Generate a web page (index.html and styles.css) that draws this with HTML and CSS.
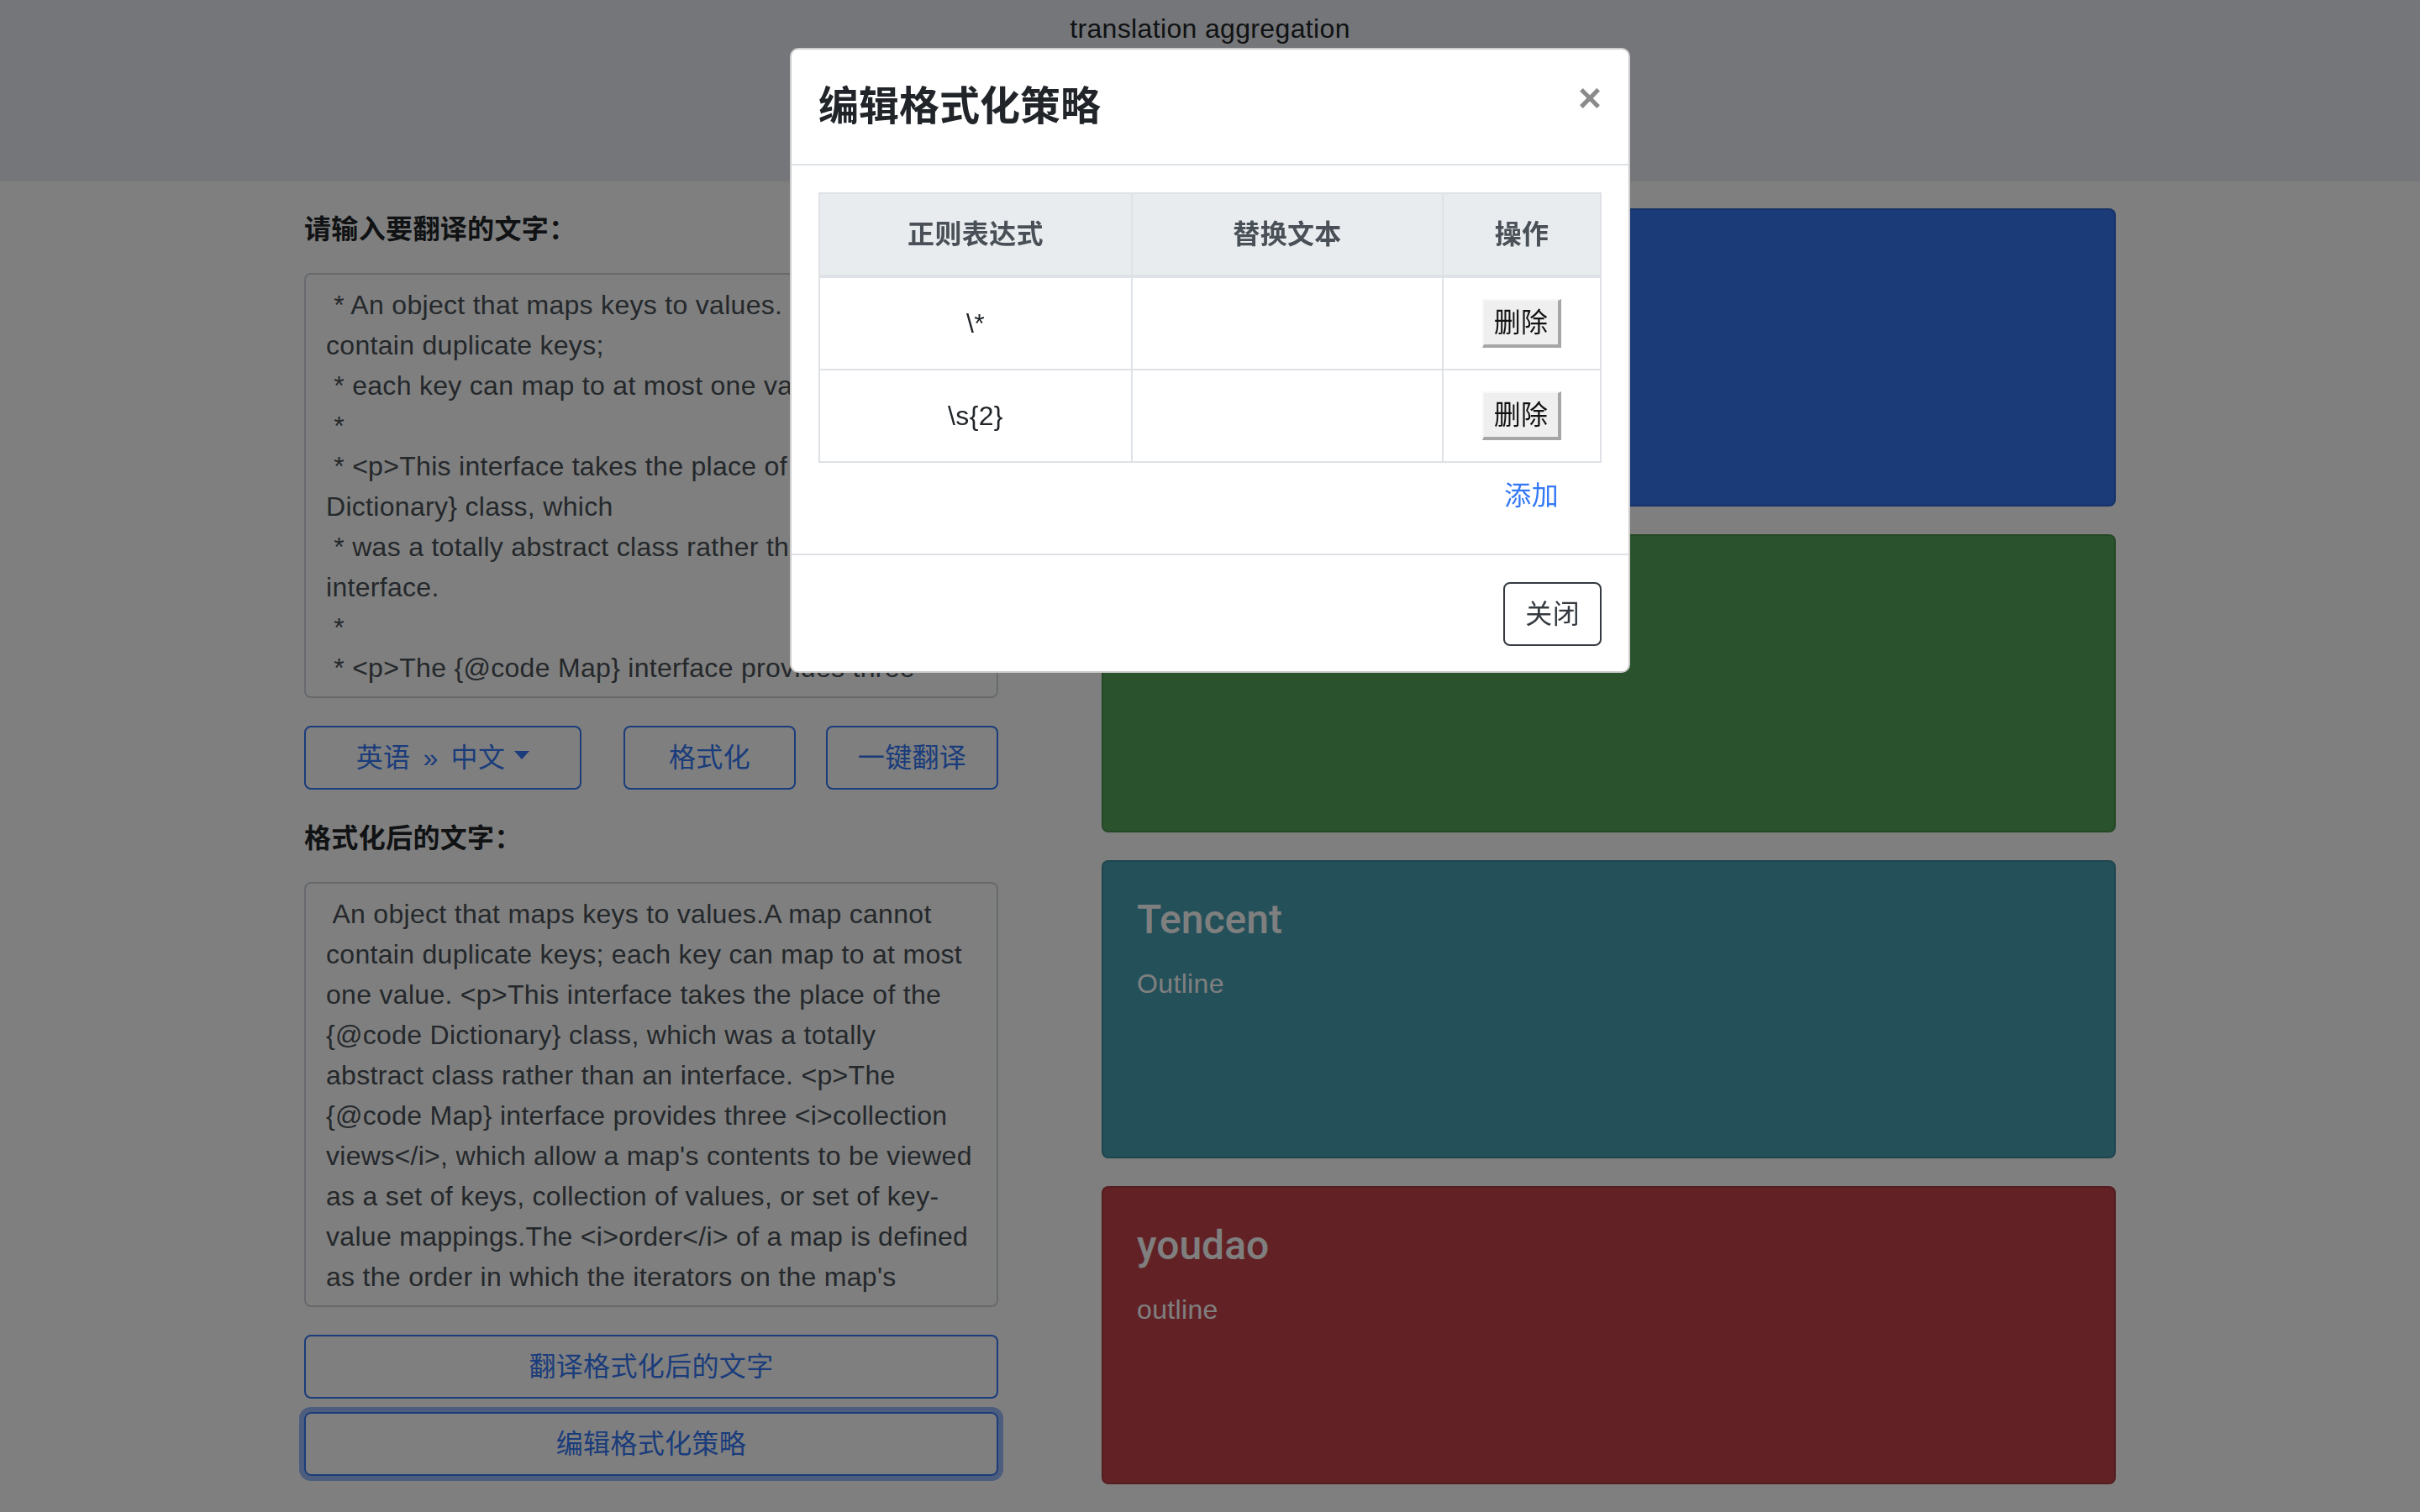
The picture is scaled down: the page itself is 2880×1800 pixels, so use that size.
FILE: index.html
```html
<!DOCTYPE html>
<html lang="zh-CN">
<head>
<meta charset="utf-8">
<title>translation aggregation</title>
<link rel="stylesheet" href="styles.css">
</head>
<body>
<header class="topbar">
  <div class="brand">translation aggregation</div>
</header>

<main class="page">
  <section class="left-col">
    <label class="field-label">请输入要翻译的文字：</label>
    <textarea class="form-control" spellcheck="false"> * An object that maps keys to values.  A map cannot
contain duplicate keys;
 * each key can map to at most one value.
 *
 * &lt;p&gt;This interface takes the place of the {@code
Dictionary} class, which
 * was a totally abstract class rather than an
interface.
 *
 * &lt;p&gt;The {@code Map} interface provides three
 * &lt;i&gt;collection views&lt;/i&gt;, which allow a map's contents to be viewed</textarea>

    <div class="btn-row">
      <button class="btn btn-outline-primary btn-lang">英语<span class="sep">»</span>中文<span class="caret"></span></button>
      <button class="btn btn-outline-primary btn-act">格式化</button>
      <button class="btn btn-outline-primary btn-act btn-act-last">一键翻译</button>
    </div>

    <label class="field-label">格式化后的文字：</label>
    <textarea class="form-control" spellcheck="false"> An object that maps keys to values.A map cannot
contain duplicate keys; each key can map to at most
one value. &lt;p&gt;This interface takes the place of the
{@code Dictionary} class, which was a totally
abstract class rather than an interface. &lt;p&gt;The
{@code Map} interface provides three &lt;i&gt;collection
views&lt;/i&gt;, which allow a map's contents to be viewed
as a set of keys, collection of values, or set of key-
value mappings.The &lt;i&gt;order&lt;/i&gt; of a map is defined
as the order in which the iterators on the map's
collection views return their elements.</textarea>

    <button class="btn btn-outline-primary btn-block">翻译格式化后的文字</button>
    <button class="btn btn-outline-primary btn-block btn-focus">编辑格式化策略</button>
  </section>

  <section class="right-col">
    <div class="card card-primary">
      <h4 class="card-title">Google</h4>
      <p class="card-text">Outline</p>
    </div>
    <div class="card card-success">
      <h4 class="card-title">Baidu</h4>
      <p class="card-text">Outline</p>
    </div>
    <div class="card card-info">
      <h4 class="card-title">Tencent</h4>
      <p class="card-text">Outline</p>
    </div>
    <div class="card card-danger">
      <h4 class="card-title">youdao</h4>
      <p class="card-text">outline</p>
    </div>
  </section>
</main>

<div class="backdrop"></div>

<div class="modal">
  <div class="modal-dialog">
    <div class="modal-content">
      <div class="modal-header">
        <h4 class="modal-title">编辑格式化策略</h4>
        <button class="close" type="button">×</button>
      </div>
      <div class="modal-body">
        <table class="rules">
          <thead>
            <tr>
              <th class="col-regex">正则表达式</th>
              <th class="col-repl">替换文本</th>
              <th>操作</th>
            </tr>
          </thead>
          <tbody>
            <tr>
              <td>\*</td>
              <td></td>
              <td><button class="btn-del" type="button">删除</button></td>
            </tr>
            <tr>
              <td>\s{2}</td>
              <td></td>
              <td><button class="btn-del" type="button">删除</button></td>
            </tr>
          </tbody>
        </table>
        <div class="add-row"><a class="add-link">添加</a></div>
      </div>
      <div class="modal-footer">
        <button class="btn btn-outline-dark" type="button">关闭</button>
      </div>
    </div>
  </div>
</div>
</body>
</html>
```

FILE: styles.css
```css
html, body {
  margin: 0;
  padding: 0;
}

body {
  width: 2880px;
  height: 1800px;
  overflow: hidden;
  background: #fff;
  color: #212529;
  font-family: "Liberation Sans", "Noto Sans CJK SC", sans-serif;
  font-size: 32px;
  line-height: 1.5;
  letter-spacing: 0.35px;
}

/* top bar */
.topbar {
  height: 216px;
  box-sizing: border-box;
  padding-top: 10px;
  background: #eaedf2;
  text-align: center;
}

.brand {
  font-size: 32px;
  line-height: 48px;
}

/* page layout */
.page {
  width: 2156px;
  margin: 0 auto;
  padding-top: 32px;
  display: flex;
  gap: 123px;
}

.left-col {
  width: 826px;
  display: flex;
  flex-direction: column;
}

.right-col {
  width: 1207px;
  display: flex;
  flex-direction: column;
  gap: 33px;
}

.field-label {
  display: block;
  font-weight: 700;
  line-height: 48px;
  margin-top: 1px;
  margin-bottom: 28px;
}

.form-control {
  display: block;
  width: 100%;
  height: 506px;
  box-sizing: border-box;
  margin: 0 0 33px;
  padding: 12px 24px;
  border: 2px solid #ced4da;
  border-radius: 8px;
  background: #fff;
  color: #495057;
  font-family: inherit;
  font-size: 32px;
  line-height: 48px;
  letter-spacing: 0.3px;
  white-space: pre;
  overflow: hidden;
  resize: none;
  outline: none;
}

/* buttons */
.btn {
  box-sizing: border-box;
  height: 76px;
  padding: 12px 24px;
  border: 2px solid transparent;
  border-radius: 8px;
  background: transparent;
  font-family: inherit;
  font-size: 32px;
  line-height: 48px;
  letter-spacing: inherit;
  text-align: center;
  white-space: nowrap;
}

.btn-outline-primary {
  color: #3478f6;
  border-color: #3478f6;
}

.btn-outline-dark {
  color: #343a40;
  border-color: #343a40;
  background: #fff;
}

.btn-row {
  display: flex;
  margin-bottom: 33px;
}

.btn-lang {
  width: 330px;
  margin-right: 50px;
}

.btn-lang .sep {
  margin: 0 15px;
}

.caret {
  display: inline-block;
  width: 0;
  height: 0;
  margin-left: 11px;
  vertical-align: 9px;
  border-top: 10px solid #3478f6;
  border-left: 9px solid transparent;
  border-right: 9px solid transparent;
}

.btn-act {
  width: 205px;
}

.btn-act-last {
  margin-left: 36px;
}

.btn-block {
  display: block;
  width: 100%;
  margin-bottom: 16px;
}

.btn-focus {
  box-shadow: 0 0 0 6px rgba(52, 120, 246, 0.5);
}

/* cards */
.card {
  height: 355px;
  box-sizing: border-box;
  padding: 40px;
  border: 2px solid rgba(0, 0, 0, 0.125);
  border-radius: 8px;
  color: #fff;
}

.card-primary { background: #3674f0; }
.card-success { background: #54a458; }
.card-info { background: #48a0b4; }
.card-danger { background: #c4444a; }

.card-title {
  margin: 0 0 23px;
  font-family: Roboto, "Liberation Sans", sans-serif;
  font-weight: 500;
  font-size: 48px;
  line-height: 1.2;
  letter-spacing: 0;
}

.card-text {
  margin: 0;
  font-size: 32px;
  line-height: 48px;
}

/* modal */
.backdrop {
  position: fixed;
  inset: 0;
  background: #000;
  opacity: 0.5;
}

.modal {
  position: fixed;
  inset: 0;
}

.modal-dialog {
  width: 1000px;
  margin: 57px auto 0;
}

.modal-content {
  background: #fff;
  border: 2px solid rgba(0, 0, 0, 0.2);
  border-radius: 10px;
  overflow: hidden;
}

.modal-header {
  display: flex;
  align-items: flex-start;
  padding: 32px;
  border-bottom: 2px solid #dee2e6;
}

.modal-title {
  margin: 0;
  font-size: 48px;
  line-height: 72px;
  font-weight: 700;
  letter-spacing: 0;
}

.close {
  margin: -30px -32px -32px auto;
  padding: 32px;
  border: 0;
  background: none;
  color: #000;
  opacity: 0.45;
  font-family: "Liberation Sans", sans-serif;
  font-size: 48px;
  font-weight: 700;
  line-height: 1;
}

.modal-body {
  padding: 32px 32px 32px;
}

.rules {
  width: 100%;
  border-collapse: collapse;
}

.rules th,
.rules td {
  padding: 24px;
  border: 2px solid #dee2e6;
  text-align: center;
  vertical-align: middle;
  line-height: 48px;
}

.rules td {
  padding: 25px 24px;
}

.rules th {
  background: #e9ecef;
  color: #495057;
  font-weight: 700;
  border-bottom-width: 4px;
}

.col-regex { width: 322px; }
.col-repl { width: 320px; }

.btn-del {
  display: block;
  margin: 0 auto;
  padding: 2px 12px;
  border-style: solid;
  border-width: 2px 4px 4px 2px;
  border-color: #f7f7f7 #a6a6a6 #a6a6a6 #f7f7f7;
  background: #efefef;
  color: #111;
  font-family: inherit;
  font-size: 32px;
  line-height: 48px;
  letter-spacing: inherit;
}

.add-row {
  height: 76px;
  display: flex;
  align-items: center;
  justify-content: flex-end;
  padding: 2px 51px 0 0;
  box-sizing: border-box;
}

.add-link {
  color: #3478f6;
  cursor: pointer;
}

.modal-footer {
  display: flex;
  justify-content: flex-end;
  padding: 32px 32px 30px;
  border-top: 2px solid #dee2e6;
}
```
